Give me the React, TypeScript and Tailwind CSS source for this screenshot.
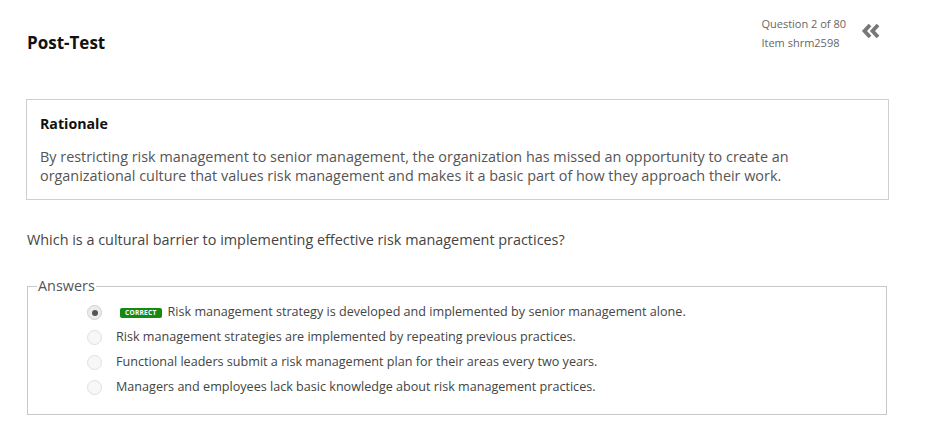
import React from "react";

const answers = [
  { text: "Risk management strategy is developed and implemented by senior management alone.", selected: true, correct: true },
  { text: "Risk management strategies are implemented by repeating previous practices." },
  { text: "Functional leaders submit a risk management plan for their areas every two years." },
  { text: "Managers and employees lack basic knowledge about risk management practices." },
];

export default function App() {
  return (
    <div className="w-[925px] h-[441px] bg-white overflow-hidden" style={{ fontFamily: '"Open Sans", "Noto Sans", sans-serif' }}>
      <div className="pl-[27px] pr-[36px]">
        <div className="flex justify-between items-start pt-[14px] h-[99px]">
          <h1 className="mt-[18px] text-[17px] leading-[22px] font-bold text-[#111]">Post-Test</h1>
          <div className="flex items-start mr-[8px]">
            <div className="text-[11px] leading-[19px] text-[#666]">
              <div>Question 2 of 80</div>
              <div>Item shrm2598</div>
            </div>
            <svg className="ml-[15px] mt-[9px]" width="20" height="16" viewBox="0 0 20 16">
              <path d="M9 2 L3.5 8 L9 14" fill="none" stroke="#777" strokeWidth="3.8" strokeLinejoin="miter" />
              <path d="M17 2 L11.5 8 L17 14" fill="none" stroke="#777" strokeWidth="3.8" strokeLinejoin="miter" />
            </svg>
          </div>
        </div>
        <div className="border border-[#cfcfcf] -ml-px px-[13px] pt-[14px] pb-[14px]">
          <div className="text-[14.2px] leading-[20px] font-bold text-[#111]">Rationale</div>
          <p className="mt-[13px] max-w-[770px] text-[14.4px] leading-[19px] text-[#555]">
            By restricting risk management to senior management, the organization has missed an opportunity to create an organizational culture that values risk management and makes it a basic part of how they approach their work.
          </p>
        </div>
        <p className="mt-[30px] text-[14.4px] leading-[20px] text-[#444]">
          Which is a cultural barrier to implementing effective risk management practices?
        </p>
        <fieldset className="mt-[26px] mr-[2px] border border-[#c8c8c8] pl-[59px] pt-[4px] pb-[14px]">
          <legend className="-ml-[50px] px-[1px] text-[14.4px] leading-[20px] text-[#555]">Answers</legend>
          {answers.map((a, i) => (
            <div key={i} className="flex items-center h-[25px]">
              <span className={`w-[15px] h-[15px] rounded-full border flex items-center justify-center ${a.selected ? "border-[#d0d0d0] bg-[#ececec]" : "border-[#e0e0e0] bg-[#f7f7f7]"}`}>
                {a.selected && <span className="w-[6px] h-[6px] rounded-full bg-[#555]" />}
              </span>
              {a.correct && (
                <span className="ml-[18px] mr-[6px] bg-[#148a14] text-white rounded-[2px] text-[6.5px] font-bold leading-[10px] px-[5px] tracking-[0.3px]">CORRECT</span>
              )}
              <span className={`${a.correct ? "" : "ml-[14px]"} text-[12.6px] text-[#444]`}>{a.text}</span>
            </div>
          ))}
        </fieldset>
      </div>
    </div>
  );
}
